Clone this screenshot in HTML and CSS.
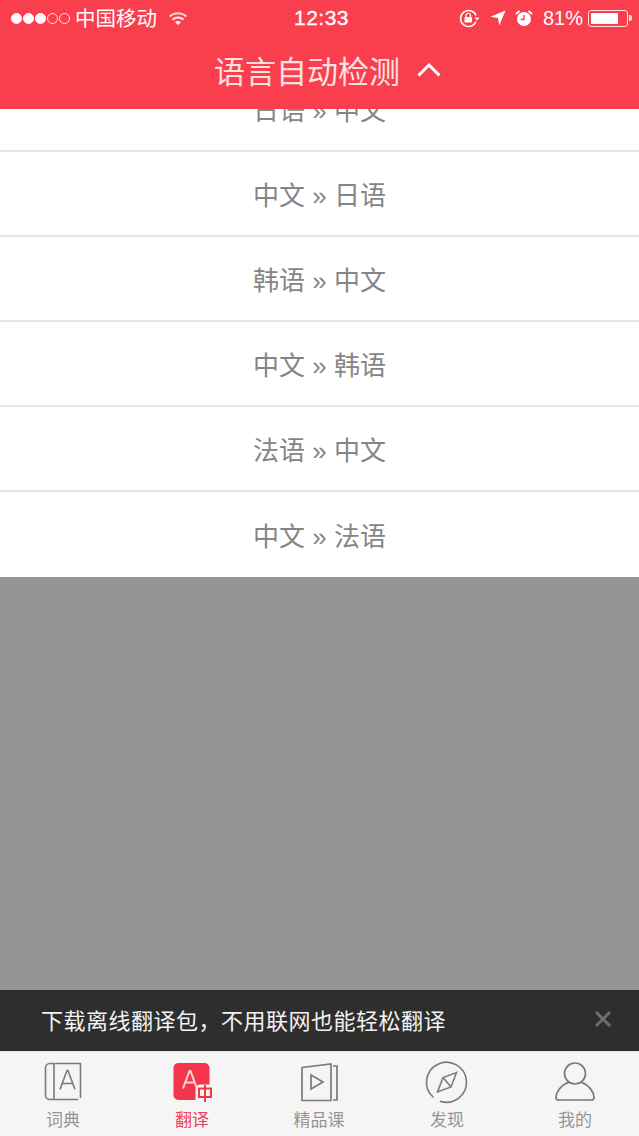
FILE: index.html
```html
<!DOCTYPE html>
<html lang="zh">
<head>
<meta charset="utf-8">
<title>语言自动检测</title>
<link rel="stylesheet" href="styles.css">
</head>
<body>
<div class="app">
  <header class="top">
    <div class="status">
      <div class="status-left">
        <span class="dots"><i class="dot on"></i><i class="dot on"></i><i class="dot on"></i><i class="dot"></i><i class="dot"></i></span>
        <span class="carrier">中国移动</span>
        <svg class="wifi" width="20" height="15" viewBox="0 0 20 15"><path d="M1.500 5.500C6.500 1 13.500 1 18.500 5.500" fill="none" stroke="#fff" stroke-opacity=".75" stroke-width="2"/><path d="M4.500 8.600C7.800 6 12.200 6 15.500 8.600" fill="none" stroke="#fff" stroke-opacity=".9" stroke-width="2"/><path d="M7 11.200C8.800 9.700 11.200 9.700 13 11.200L10 14Z" fill="#fff"/></svg>
      </div>
      <div class="clock">12:33</div>
      <div class="status-right">
        <svg class="lock" width="21" height="19" viewBox="0 0 21 19"><path d="M17 12.500A8 8 0 1 1 17 6.500" fill="none" stroke="#fff" stroke-width="1.500"/><path d="M15.500 8.500h5L18 11.500Z" fill="#fff"/><rect x="5.500" y="8" width="7.500" height="5.500" rx=".8" fill="#fff"/><path d="M7 8V6.500a2.200 2.200 0 0 1 4.500 0V8" fill="none" stroke="#fff" stroke-width="1.200"/></svg>
        <svg class="arrow" width="16" height="16" viewBox="0 0 16 16"><path d="M15.500.5L9.300 15.500 8 8 .5 6.700Z" fill="#fff"/></svg>
        <svg class="alarm" width="18" height="18" viewBox="0 0 18 18"><circle cx="9" cy="10" r="7" fill="#fff"/><path d="M9 6v4.500H5.800" fill="none" stroke="#f93e4e" stroke-width="1.400"/><path d="M1 5l3.500-3M17 5l-3.500-3" stroke="#fff" stroke-width="2.200"/></svg>
        <span class="pct">81%</span>
        <span class="battery"><span class="battery-fill"></span></span><span class="battery-tip"></span>
      </div>
    </div>
    <div class="title-bar">
      <span class="title">语言自动检测</span>
      <svg class="chev" width="24" height="15" viewBox="0 0 24 15"><path d="M1.500 13.500L12 3l10.500 10.500" fill="none" stroke="#fff" stroke-width="3"/></svg>
    </div>
  </header>

  <div class="sheet">
    <ul class="list">
      <li class="row">日语 » 中文</li>
      <li class="row">中文 » 日语</li>
      <li class="row">韩语 » 中文</li>
      <li class="row">中文 » 韩语</li>
      <li class="row">法语 » 中文</li>
      <li class="row">中文 » 法语</li>
    </ul>
  </div>

  <div class="scrim"></div>

  <div class="banner">
    <span class="banner-text">下载离线翻译包，不用联网也能轻松翻译</span>
    <svg class="close" width="18" height="18" viewBox="0 0 18 18"><path d="M2 2l14 14M16 2L2 16" stroke="#6d6d6d" stroke-width="3"/></svg>
  </div>

  <nav class="tabs">
    <div class="tab">
      <svg class="tab-icon" width="38" height="40" viewBox="0 0 38 40"><g fill="none" stroke="#7a7a7a" stroke-width="1.600"><path d="M11 1.500H36.500V36M34 37.500H10.500"/><path d="M10.500 1.500H6A4.500 4.500 0 0 0 1.500 6V33A4.500 4.500 0 0 0 6 37.500H10.500"/><path d="M10 1.500V37.500"/><path d="M16 27.500L23 8.500h1L31 27.500M18.500 21.500h10"/></g></svg>
      <span class="tab-label">词典</span>
    </div>
    <div class="tab active">
      <svg class="tab-icon" width="40" height="40" viewBox="0 0 40 40"><path d="M6.500 1h26a5 5 0 0 1 5 5v16.500H28.500a5 5 0 0 0-5 5V38H6.500a5 5 0 0 1-5-5V6a5 5 0 0 1 5-5Z" fill="#f4364a"/><path d="M11 26.500L17.500 9h1L25 26.500M13.500 20.500h9.500" fill="none" stroke="#fbd3d7" stroke-width="2"/><g fill="none" stroke="#f4364a" stroke-width="2"><rect x="27" y="26.500" width="12" height="8.500"/><path d="M33 23V40"/></g></svg>
      <span class="tab-label">翻译</span>
    </div>
    <div class="tab">
      <svg class="tab-icon" width="38" height="40" viewBox="0 0 38 40"><g fill="none" stroke="#7a7a7a" stroke-width="1.700"><path d="M2 5.500L31 2V38.500H2Z"/><path d="M11 13L23 20 11 27Z"/><path d="M33 4H37V38H33"/></g></svg>
      <span class="tab-label">精品课</span>
    </div>
    <div class="tab">
      <svg class="tab-icon" width="42" height="40" viewBox="0 0 42 40"><g fill="none" stroke="#7a7a7a" stroke-width="1.600"><path d="M7.500 35.500A20 20 0 1 1 14 39.200"/><path d="M30.500 10.500L25 25 11.500 30 17 15.500Z"/><path d="M17 15.500L25 25"/></g></svg>
      <span class="tab-label">发现</span>
    </div>
    <div class="tab">
      <svg class="tab-icon" width="42" height="40" viewBox="0 0 42 40"><g fill="none" stroke="#7a7a7a" stroke-width="1.700"><circle cx="21" cy="11.500" r="10.500"/><path d="M14.500 20.500C7 23 2 30 2 35.500 2 37 3 38 4.500 38h33c1.500 0 2.500-1 2.500-2.500C40 30 35 23 27.500 20.500"/></g></svg>
      <span class="tab-label">我的</span>
    </div>
  </nav>
</div>
</body>
</html>
```

FILE: styles.css
```css
* { box-sizing: border-box; }
html, body { margin: 0; padding: 0; }
body {
  font-family: "Liberation Sans", "Noto Sans CJK SC", sans-serif;
  background: #959595;
}
.app {
  width: 639px;
  height: 1136px;
  display: flex;
  flex-direction: column;
  overflow: hidden;
}
.top {
  height: 109px;
  flex: none;
  background: #f93e4e;
  color: #fff;
  display: flex;
  flex-direction: column;
}
.status {
  height: 36px;
  display: grid;
  grid-template-columns: 1fr auto 1fr;
  align-items: center;
  padding: 0 7px 0 11px;
}
.status-left, .status-right { display: flex; align-items: center; }
.status-right { justify-content: flex-end; }
.dots { display: flex; gap: 1px; }
.dot {
  width: 11px;
  height: 11px;
  border-radius: 50%;
  border: 1px solid #fff;
  opacity: .85;
}
.dot.on { background: #fff; opacity: 1; }
.carrier { font-size: 20.500px; margin-left: 5px; padding-bottom: 2px; }
.wifi { margin-left: 11px; }
.clock { font-size: 21px; letter-spacing: .5px; -webkit-text-stroke: .3px #fff; }
.lock { margin-right: 10px; }
.arrow { margin-right: 9px; }
.alarm { margin-right: 10px; }
.pct { font-size: 20px; margin-right: 5px; }
.battery {
  width: 40px;
  height: 17px;
  border: 1px solid #fde0e2;
  border-radius: 3px;
  padding: 2px;
  display: block;
}
.battery-fill { display: block; width: 80%; height: 100%; background: #fff; border-radius: 1px; }
.battery-tip { width: 3px; height: 6px; background: #fde0e2; margin-left: 1px; border-radius: 0 2px 2px 0; }
.title-bar {
  flex: 1;
  display: flex;
  align-items: center;
  justify-content: center;
  gap: 17px;
  padding: 0 0 6px 16px;
}
.title { font-size: 31px; color: #fde0e2; }
.chev { display: block; }

.sheet {
  flex: none;
  height: 468px;
  overflow: hidden;
  background: #fff;
}
.list {
  list-style: none;
  margin: -42px 0 0;
  padding: 0;
}
.row {
  height: 85px;
  border-bottom: 2px solid #e6e6e6;
  display: flex;
  align-items: center;
  justify-content: center;
  font-size: 26px;
  color: #858585;
  white-space: pre;
}
.row:last-child { border-bottom: 0; }
.scrim { flex: 1; background: #959595; }

.banner {
  flex: none;
  height: 61px;
  background: #2e2e2e;
  display: flex;
  align-items: center;
  justify-content: space-between;
  padding: 0 27px 3px 41px;
}
.banner-text { font-size: 22px; letter-spacing: .5px; color: #f2f2f2; }
.close { display: block; }

.tabs {
  flex: none;
  height: 85px;
  background: #f5f5f5;
  border-top: 1px solid #e6e6e6;
  display: grid;
  grid-template-columns: 126px 132px 122px 134px 122px;
  padding-top: 10px;
}
.tab {
  display: flex;
  flex-direction: column;
  align-items: center;
  color: #959595;
}
.tab-icon { display: block; height: 40px; flex: none; overflow: visible; }
.tab-label { font-size: 17px; line-height: 22px; margin-top: 8px; }
.tab.active .tab-label { color: #ec4256; }
```
